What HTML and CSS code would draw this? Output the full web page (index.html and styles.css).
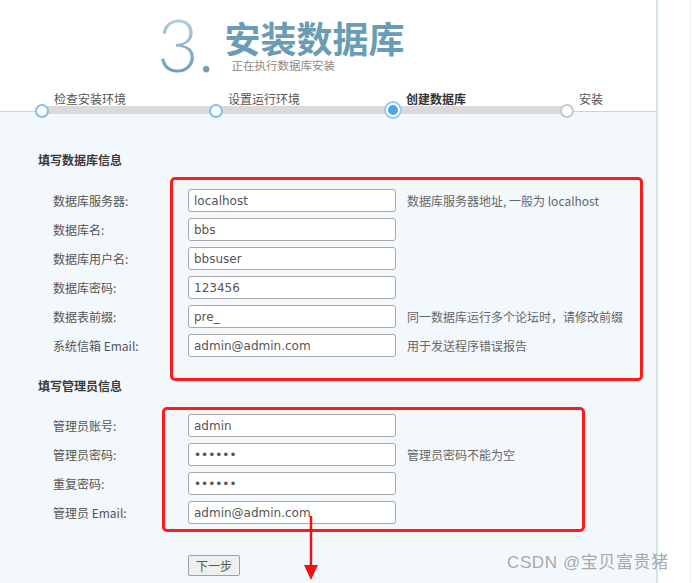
FILE: index.html
```html
<!DOCTYPE html>
<html lang="zh-CN">
<head>
<meta charset="utf-8">
<title>安装数据库</title>
<link rel="stylesheet" href="styles.css">
</head>
<body>
<div class="page">
  <div class="header">
    <div class="big-num">3.</div>
    <div class="title-block">
      <h1 class="title">安装数据库</h1>
      <div class="subtitle">正在执行数据库安装</div>
    </div>
  </div>
  <div class="steps">
    <div class="step s1 done"><div class="label">检查安装环境</div><div class="bar"></div></div>
    <div class="step s2 done"><div class="label">设置运行环境</div><div class="bar"></div></div>
    <div class="step s3 current"><div class="label">创建数据库</div><div class="bar"></div></div>
    <div class="step s4 todo"><div class="label">安装</div><div class="bar"></div></div>
  </div>
  <div class="content">
    <div class="section-title">填写数据库信息</div>
    <div class="form">
      <label class="lbl">数据库服务器:</label><input class="inp" type="text" value="localhost"><span class="hint">数据库服务器地址, 一般为 localhost</span>
      <label class="lbl">数据库名:</label><input class="inp" type="text" value="bbs"><span class="hint"></span>
      <label class="lbl">数据库用户名:</label><input class="inp" type="text" value="bbsuser"><span class="hint"></span>
      <label class="lbl">数据库密码:</label><input class="inp" type="text" value="123456"><span class="hint"></span>
      <label class="lbl">数据表前缀:</label><input class="inp" type="text" value="pre_"><span class="hint">同一数据库运行多个论坛时，请修改前缀</span>
      <label class="lbl">系统信箱 Email:</label><input class="inp" type="text" value="admin@admin.com"><span class="hint">用于发送程序错误报告</span>
    </div>
    <div class="section-title second">填写管理员信息</div>
    <div class="form">
      <label class="lbl">管理员账号:</label><input class="inp" type="text" value="admin"><span class="hint"></span>
      <label class="lbl">管理员密码:</label><input class="inp" type="password" value="123456"><span class="hint">管理员密码不能为空</span>
      <label class="lbl">重复密码:</label><input class="inp" type="password" value="123456"><span class="hint"></span>
      <label class="lbl">管理员 Email:</label><input class="inp" type="text" value="admin@admin.com"><span class="hint"></span>
    </div>
    <div class="actions"><button class="btn" type="button">下一步</button></div>
  </div>
</div>
<div class="side"></div>

<div class="mark box1"></div>
<div class="mark box2"></div>
<svg class="arrow" width="20" height="70" viewBox="0 0 20 70">
  <line x1="10" y1="0" x2="10" y2="52" stroke="#f01010" stroke-width="2.5"/>
  <polygon points="3,49 17,49 10,64" fill="#f01010"/>
</svg>
<div class="watermark">CSDN @宝贝富贵猪</div>
</body>
</html>
```
FILE: styles.css
```css
html, body {
  margin: 0;
  padding: 0;
  background: #ffffff;
}
body {
  display: flex;
  min-height: 583px;
  font-family: "Noto Sans CJK SC", "Noto Sans", sans-serif;
  font-size: 12px;
  color: #555;
  position: relative;
  overflow: hidden;
}
.page {
  width: 656px;
  border-right: 2px solid #d6e4ee;
  display: flex;
  flex-direction: column;
  min-height: 583px;
}
.side {
  width: 32px;
  border-right: 1px solid #ececec;
}
.header {
  height: 92px;
  display: flex;
  padding-left: 157px;
  box-sizing: border-box;
}
.big-num {
  font-family: "Lato", "Open Sans", sans-serif;
  font-weight: 300;
  font-size: 72px;
  line-height: 1;
  margin-top: 8px;
  background: linear-gradient(180deg, #c3dbe6 0%, #86b1c4 50%, #5d8fa6 100%);
  -webkit-background-clip: text;
  background-clip: text;
  color: transparent;
  letter-spacing: -1px;
}
.title-block {
  margin-left: 11px;
  padding-top: 19px;
}
.title {
  margin: 0;
  font-size: 36px;
  line-height: 36px;
  font-weight: 700;
  color: #6a9db3;
  letter-spacing: 0;
}
.subtitle {
  margin-top: 2px;
  margin-left: 7px;
  font-size: 11.5px;
  line-height: 16px;
  color: #8a8a8a;
}
.steps {
  display: flex;
  padding-left: 42px;
  position: relative;
  z-index: 1;
  margin-bottom: -3px;
}
.step { position: relative; }
.s1 { width: 174px; }
.s2 { width: 178px; }
.s3 { width: 173px; }
.s4 { width: 60px; }
.label {
  height: 14px;
  line-height: 14px;
  padding-left: 12px;
  font-size: 12px;
  color: #555;
  white-space: nowrap;
}
.current .label { color: #333; font-weight: 700; }
.bar {
  height: 8px;
  background: #dadada;
  position: relative;
}
.s4 .bar { background: transparent; }
.bar::before {
  content: "";
  position: absolute;
  left: -7px;
  top: -2px;
  width: 10px;
  height: 10px;
  border-radius: 50%;
  background: #fff;
  border: 2px solid #7fc1ec;
}
.current .bar::before {
  left: -8px;
  top: -3px;
  width: 10px;
  height: 10px;
  background: #4aa7e6;
  border: 2px solid #ffffff;
  box-shadow: 0 0 0 2px #93cdf1;
}
.todo .bar::before {
  border-color: #c9c9c9;
}
.content {
  flex: 1;
  background: #f3f8fc;
  border-top: 1px solid #b9d9ee;
  padding: 40px 0 0 38px;
}
.section-title {
  font-size: 12px;
  line-height: 16px;
  font-weight: 700;
  color: #3a3a3a;
  margin-bottom: 21px;
}
.section-title.second {
  margin-top: 21px;
  margin-bottom: 20px;
}
.form {
  display: grid;
  grid-template-columns: 150px 208px auto;
  row-gap: 6px;
  align-items: center;
}
.lbl {
  padding-left: 15px;
  font-size: 12px;
  color: #555;
  white-space: nowrap;
}
.inp {
  box-sizing: border-box;
  width: 208px;
  height: 23px;
  margin: 0;
  border: 1px solid #a8a8a8;
  border-radius: 3px;
  background: #fff;
  padding: 1px 5px 0;
  font-family: "DejaVu Sans", sans-serif;
  font-size: 12px;
  color: #555;
}
.hint {
  padding-left: 11px;
  font-size: 12px;
  color: #666;
  white-space: nowrap;
}
.actions {
  margin-top: 31px;
  padding-left: 150px;
}
.btn {
  width: 52px;
  height: 21px;
  padding: 0;
  background: #efefef;
  border: 1px solid #a0a0a0;
  border-radius: 2px;
  font-family: "Noto Sans CJK SC", sans-serif;
  font-size: 12px;
  color: #555;
}
.mark {
  position: absolute;
  border: 3px solid #ff1a1a;
  border-radius: 5px;
  box-sizing: border-box;
}
.box1 { left: 170px; top: 177px; width: 473px; height: 204px; }
.box2 { left: 162px; top: 407px; width: 423px; height: 125px; }
.arrow {
  position: absolute;
  left: 301px;
  top: 516px;
}
.watermark {
  position: absolute;
  left: 507px;
  top: 551px;
  font-family: "Liberation Sans", "Noto Sans CJK SC", sans-serif;
  font-size: 17px;
  line-height: 24px;
  letter-spacing: 0.6px;
  color: rgba(120, 120, 120, 0.65);
  white-space: nowrap;
}
```
